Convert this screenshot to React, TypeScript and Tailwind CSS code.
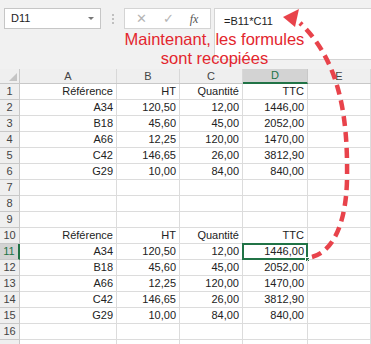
import React from "react";

const colW = ["w-[97px]", "w-[63px]", "w-[63px]", "w-[65px]", "w-[63px]"];
const letters = ["A", "B", "C", "D", "E"];

const head = ["Référence", "HT", "Quantité", "TTC"];
const lines = [
  ["A34", "120,50", "12,00", "1446,00"],
  ["B18", "45,60", "45,00", "2052,00"],
  ["A66", "12,25", "120,00", "1470,00"],
  ["C42", "146,65", "26,00", "3812,90"],
  ["G29", "10,00", "84,00", "840,00"],
];

// rows 1..17 of the sheet (17 is only a sliver at the bottom)
const rows: string[][] = [
  head,
  ...lines,
  [],
  [],
  [],
  head,
  ...lines,
  [],
  [],
];

function Arrow() {
  return (
    <svg
      className="absolute left-0 top-0 pointer-events-none"
      width={371}
      height={344}
      viewBox="0 0 371 344"
    >
      <path
        d="M312 257 C334 251 346 222 347 180 C348 120 341 62 300 23"
        fill="none"
        stroke="#e8434b"
        strokeWidth={4.5}
        strokeDasharray="10 6"
      />
      <polygon points="283,17 299,9 295,27" fill="#e8434b" />
    </svg>
  );
}

export default function App() {
  return (
    <div
      className="relative w-[371px] h-[344px] overflow-hidden bg-[#f1f1f1] text-[11px] text-[#222]"
      style={{ fontFamily: '"Liberation Sans", Arial, sans-serif' }}
    >
      {/* formula bar */}
      <div className="flex items-start h-[60px] pt-[8px] pl-[4px]">
        <div className="flex items-center justify-between w-[97px] h-[21px] bg-white border border-[#c6c6c6] pl-[6px] pr-[6px]">
          <span>D11</span>
          <span className="w-0 h-0 border-l-[3px] border-r-[3px] border-t-[3px] border-l-transparent border-r-transparent border-t-[#777]" />
        </div>
        <div className="flex flex-col items-center justify-center gap-[2px] w-[23px] h-[21px]">
          <span className="w-[2px] h-[2px] bg-[#c0c0c0]" />
          <span className="w-[2px] h-[2px] bg-[#c0c0c0]" />
          <span className="w-[2px] h-[2px] bg-[#c0c0c0]" />
        </div>
        <div className="flex items-center w-[87px] h-[21px] bg-white border border-[#d4d4d4] text-[#b4b4b4]">
          <span className="w-[32px] text-center text-[13px]">✕</span>
          <span className="w-[22px] text-center text-[13px]">✓</span>
          <span
            className="w-[30px] text-center text-[#555] italic text-[12px]"
            style={{ fontFamily: '"Liberation Serif", serif' }}
          >
            fx
          </span>
        </div>
        <div className="ml-[3px] flex-1 h-[52px] bg-white border border-[#d4d4d4] border-r-0 pl-[9px] pt-[4px]">
          =B11*C11
        </div>
      </div>

      {/* sheet */}
      <div className="mt-[9px] bg-white">
        <div className="flex h-[15px] bg-[#efefef] border-b border-[#c8c8c8] text-[#444]">
          <div className="relative w-[20px] border-r border-[#c8c8c8]">
            <span className="absolute right-[2px] bottom-[2px] w-0 h-0 border-l-[8px] border-b-[8px] border-l-transparent border-b-[#c4c4c4]" />
          </div>
          {letters.map((l, i) =>
            i === 3 ? (
              <div
                key={l}
                className={`${colW[i]} flex items-center justify-center bg-[#d3d3d3] text-[#217346] border-r border-[#c8c8c8] border-b-2 border-b-[#217346] -mb-px`}
              >
                {l}
              </div>
            ) : (
              <div
                key={l}
                className={`${colW[i]} flex items-center justify-center border-r border-[#d8d8d8]`}
              >
                {l}
              </div>
            )
          )}
        </div>

        {rows.map((r, ri) => {
          const n = ri + 1;
          const sel = n === 11;
          return (
            <div key={n} className="flex h-[16px]">
              <div
                className={
                  sel
                    ? "w-[20px] flex items-center justify-center bg-[#d3d3d3] text-[#217346] border-b border-[#c8c8c8] border-r-2 border-r-[#217346]"
                    : "w-[20px] flex items-center justify-center bg-[#efefef] text-[#444] border-b border-r border-[#c8c8c8]"
                }
              >
                {n < 17 ? n : ""}
              </div>
              {colW.map((w, ci) => (
                <div
                  key={ci}
                  className={`${w} relative flex items-center justify-end pr-[3px] border-r border-b border-[#dcdcdc]`}
                >
                  {r[ci] ?? ""}
                  {sel && ci === 3 && (
                    <>
                      <div className="absolute -left-[1px] -top-[1px] -right-[1px] -bottom-[1px] border-2 border-[#217346]" />
                      <div className="absolute -right-[3px] -bottom-[3px] w-[5px] h-[5px] bg-[#217346] border border-white" />
                    </>
                  )}
                </div>
              ))}
            </div>
          );
        })}
      </div>

      {/* annotation */}
      <div className="absolute left-[114px] top-[30px] w-[201px] text-center text-[16.5px] leading-[19px] text-[#e3262e]">
        Maintenant, les formules
        <br />
        sont recopiées
      </div>
      <Arrow />
    </div>
  );
}
